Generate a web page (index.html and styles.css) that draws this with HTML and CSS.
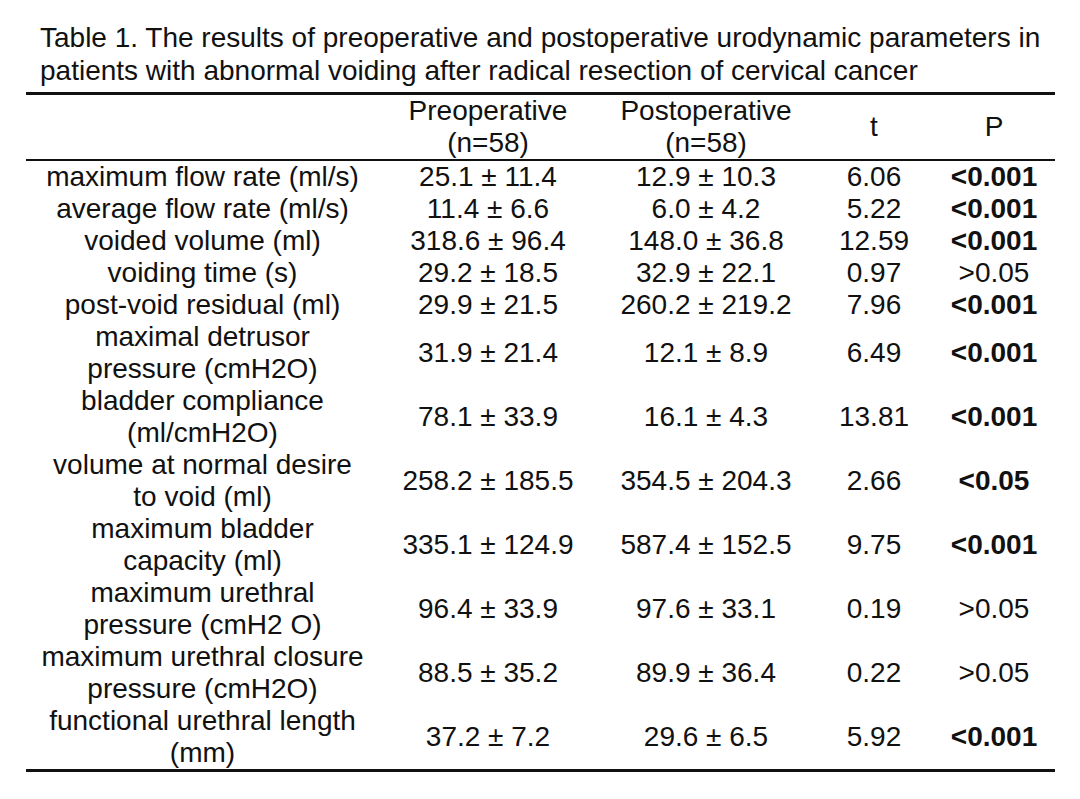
FILE: index.html
```html
<!DOCTYPE html>
<html lang="en">
<head>
<meta charset="utf-8">
<title>Table 1</title>
<link rel="stylesheet" href="styles.css">
</head>
<body>
<div class="page">
  <p class="caption">Table 1. The results of preoperative and postoperative urodynamic parameters in<br>patients with abnormal voiding after radical resection of cervical cancer</p>
  <table class="results">
    <colgroup>
      <col class="c-label">
      <col class="c-pre">
      <col class="c-post">
      <col class="c-t">
      <col class="c-p">
    </colgroup>
    <thead>
      <tr>
        <th></th>
        <th>Preoperative<br>(n=58)</th>
        <th>Postoperative<br>(n=58)</th>
        <th>t</th>
        <th>P</th>
      </tr>
    </thead>
    <tbody>
      <tr><td>maximum flow rate (ml/s)</td><td>25.1 ± 11.4</td><td>12.9 ± 10.3</td><td>6.06</td><td class="sig">&lt;0.001</td></tr>
      <tr><td>average flow rate (ml/s)</td><td>11.4 ± 6.6</td><td>6.0 ± 4.2</td><td>5.22</td><td class="sig">&lt;0.001</td></tr>
      <tr><td>voided volume (ml)</td><td>318.6 ± 96.4</td><td>148.0 ± 36.8</td><td>12.59</td><td class="sig">&lt;0.001</td></tr>
      <tr><td>voiding time (s)</td><td>29.2 ± 18.5</td><td>32.9 ± 22.1</td><td>0.97</td><td>&gt;0.05</td></tr>
      <tr><td>post-void residual (ml)</td><td>29.9 ± 21.5</td><td>260.2 ± 219.2</td><td>7.96</td><td class="sig">&lt;0.001</td></tr>
      <tr><td>maximal detrusor<br>pressure (cmH2O)</td><td>31.9 ± 21.4</td><td>12.1 ± 8.9</td><td>6.49</td><td class="sig">&lt;0.001</td></tr>
      <tr><td>bladder compliance<br>(ml/cmH2O)</td><td>78.1 ± 33.9</td><td>16.1 ± 4.3</td><td>13.81</td><td class="sig">&lt;0.001</td></tr>
      <tr><td>volume at normal desire<br>to void (ml)</td><td>258.2 ± 185.5</td><td>354.5 ± 204.3</td><td>2.66</td><td class="sig">&lt;0.05</td></tr>
      <tr><td>maximum bladder<br>capacity (ml)</td><td>335.1 ± 124.9</td><td>587.4 ± 152.5</td><td>9.75</td><td class="sig">&lt;0.001</td></tr>
      <tr><td>maximum urethral<br>pressure (cmH2 O)</td><td>96.4 ± 33.9</td><td>97.6 ± 33.1</td><td>0.19</td><td>&gt;0.05</td></tr>
      <tr><td>maximum urethral closure<br>pressure (cmH2O)</td><td>88.5 ± 35.2</td><td>89.9 ± 36.4</td><td>0.22</td><td>&gt;0.05</td></tr>
      <tr><td>functional urethral length<br>(mm)</td><td>37.2 ± 7.2</td><td>29.6 ± 6.5</td><td>5.92</td><td class="sig">&lt;0.001</td></tr>
    </tbody>
  </table>
</div>
</body>
</html>
```
FILE: styles.css
```css
html, body {
  margin: 0;
  padding: 0;
  background: #ffffff;
}

.page {
  padding: 21px 0 0 26px;
  width: 1029px;
  font-family: "Liberation Sans", Arial, sans-serif;
  font-size: 28px;
  color: #111111;
}

.caption {
  margin: 0 0 5px 14px;
  line-height: 33px;
  white-space: nowrap;
}

.results {
  width: 1029px;
  table-layout: fixed;
  border-collapse: collapse;
  border-top: 3px solid #111111;
  border-bottom: 3px solid #111111;
}

.c-label { width: 353px; }
.c-pre { width: 218px; }
.c-post { width: 218px; }
.c-t { width: 118px; }
.c-p { width: 122px; }

.results th,
.results td {
  padding: 0;
  text-align: center;
  vertical-align: middle;
  line-height: 32px;
  font-weight: normal;
  white-space: nowrap;
}

.results thead tr {
  border-bottom: 2px solid #111111;
}

.results td.sig {
  font-weight: bold;
}
```
